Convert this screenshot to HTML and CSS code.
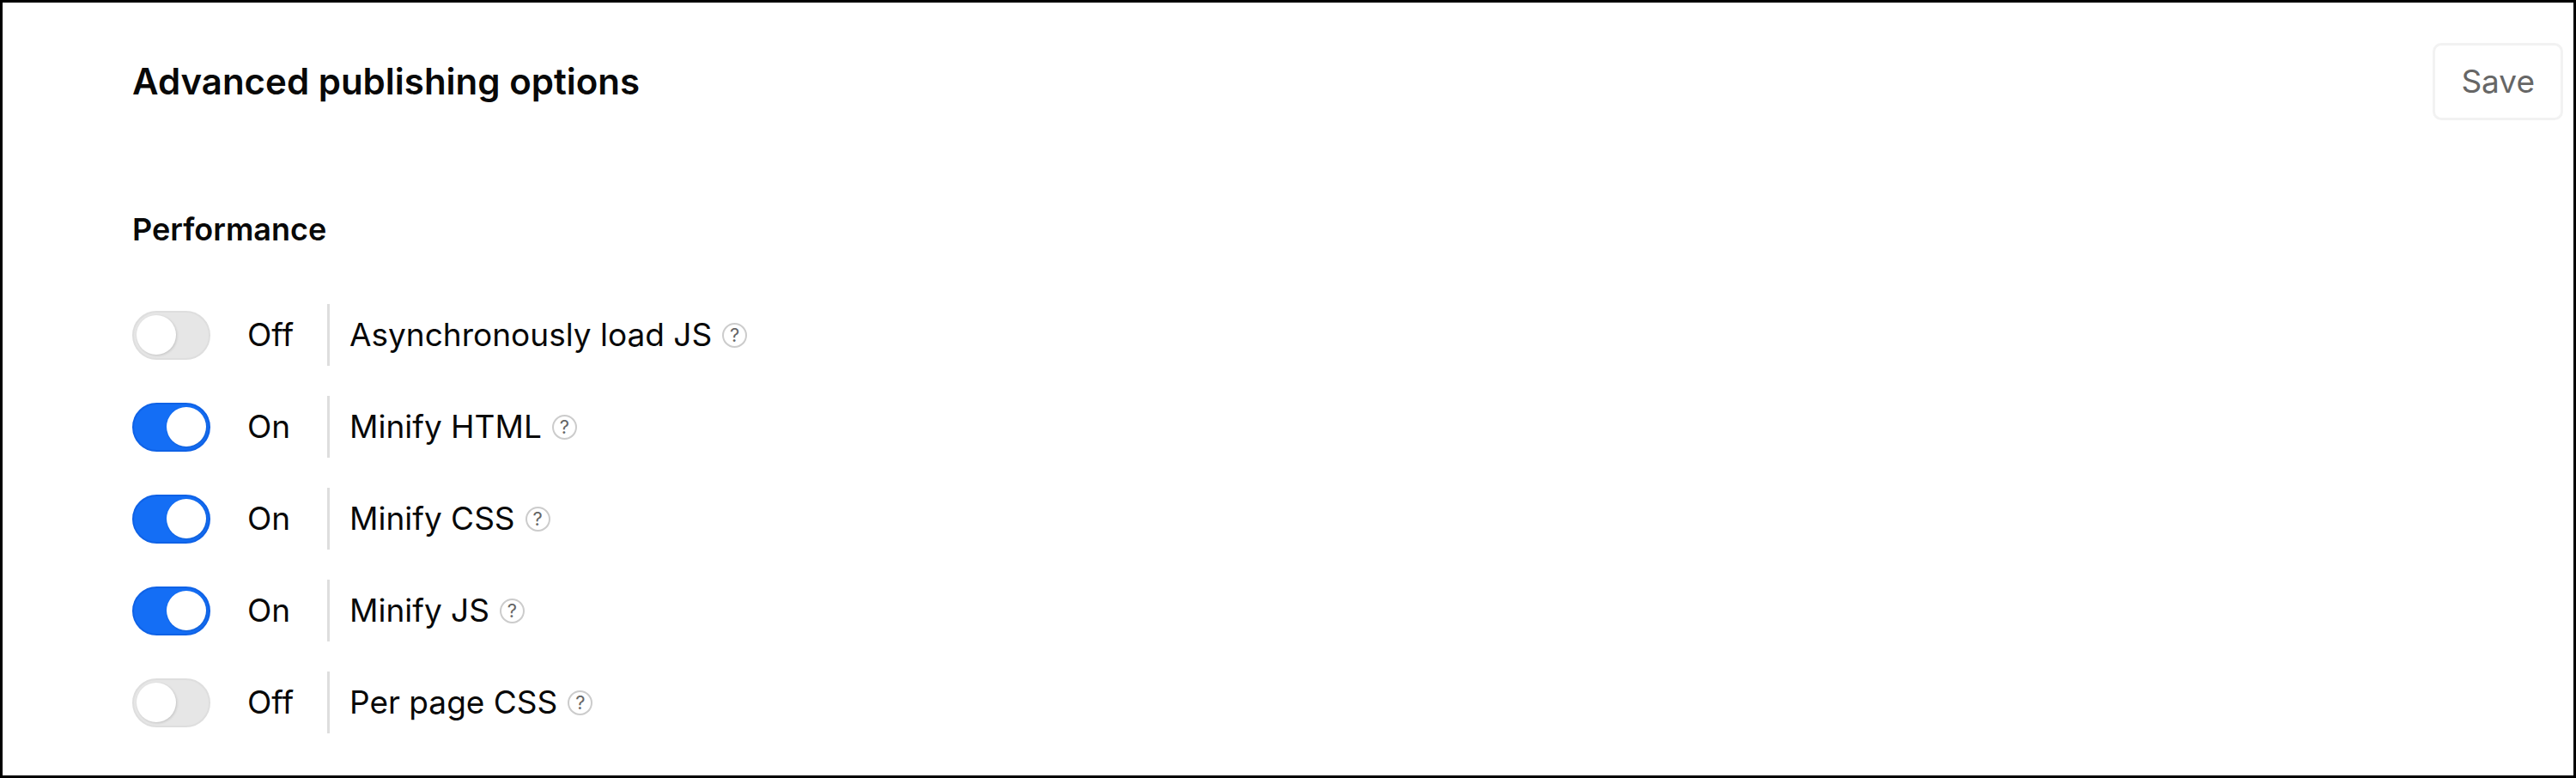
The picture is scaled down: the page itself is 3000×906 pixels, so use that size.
FILE: index.html
```html
<!DOCTYPE html>
<html lang="en">
    <head>
        <meta charset="utf-8">
        <title>Advanced publishing options</title>
        <link rel="stylesheet" href="styles.css">
    </head>
    <body>
        <main class="panel">
            <header class="panel-header">
                <h1>Advanced publishing options</h1>
                <button type="button" class="save" disabled>Save</button>
            </header>
            <section>
                <h2>Performance</h2>
                <ul class="options">
                    <li class="option">
                        <input type="checkbox" class="switch" id="async-js">
                        <span class="state">Off</span>
                        <label for="async-js">Asynchronously load JS</label>
                        <button type="button" class="help">?</button>
                    </li>
                    <li class="option">
                        <input type="checkbox" class="switch" id="minify-html" checked>
                        <span class="state">On</span>
                        <label for="minify-html">Minify HTML</label>
                        <button type="button" class="help">?</button>
                    </li>
                    <li class="option">
                        <input type="checkbox" class="switch" id="minify-css" checked>
                        <span class="state">On</span>
                        <label for="minify-css">Minify CSS</label>
                        <button type="button" class="help">?</button>
                    </li>
                    <li class="option">
                        <input type="checkbox" class="switch" id="minify-js" checked>
                        <span class="state">On</span>
                        <label for="minify-js">Minify JS</label>
                        <button type="button" class="help">?</button>
                    </li>
                    <li class="option">
                        <input type="checkbox" class="switch" id="page-css">
                        <span class="state">Off</span>
                        <label for="page-css">Per page CSS</label>
                        <button type="button" class="help">?</button>
                    </li>
                </ul>
            </section>
        </main>
    <script>
        // keep the On/Off text in step with the switch, and allow saving once something changed
        document.querySelectorAll('.switch').forEach(input => {
            input.addEventListener('change', () => {
                input.nextElementSibling.textContent = input.checked ? 'On' : 'Off';
                document.querySelector('.save').disabled = false;
            });
        });
    </script>
    </body>
</html>
```

FILE: styles.css
```css
* {
    box-sizing: border-box;
}

body {
    margin: 0;
    background-color: #fff;
    color: #080808;
    font-family: Inter, "Liberation Sans", sans-serif;
    font-size: 37px;
    line-height: 48px;
}

.panel {
    min-height: 100vh;
    padding: 47px 12px 47px 151px;
    border: 3px solid #000;
}

.panel-header {
    display: flex;
    align-items: center;
    justify-content: space-between;
    margin-bottom: 103px;
}

h1 {
    margin: 0;
    font-size: 42px;
    font-weight: 600;
}

h2 {
    margin: 0 0 63px;
    font-size: 36px;
    font-weight: 600;
}

.save {
    height: 90px;
    padding: 0 30px;
    border: 3px solid #f2f2f2;
    border-radius: 10px;
    background-color: #fff;
    color: #666;
    font: inherit;
}

.options {
    display: flex;
    flex-direction: column;
    gap: 35px;
    margin: 0;
    padding: 0;
    list-style: none;
}

.option {
    display: flex;
    align-items: center;
    height: 72px;
}

.switch {
    appearance: none;
    display: flex;
    align-items: center;
    width: 91px;
    height: 57px;
    margin: 0 43px 0 0;
    padding: 0 3px;
    border: 2px solid #dedede;
    border-radius: 29px;
    background-color: #e6e6e6;
    cursor: pointer;
}

.switch::before {
    content: "";
    width: 46px;
    height: 46px;
    border-radius: 50%;
    background-color: #fff;
    box-shadow: 1px 1px 3px rgba(0, 0, 0, 0.15);
}

.switch:checked {
    justify-content: flex-end;
    border-color: #0f62e6;
    background-color: #146ef5;
}

.state {
    width: 93px;
}

.option label {
    display: flex;
    align-items: center;
    height: 72px;
    padding-left: 23px;
    border-left: 3px solid #dedede;
}

.help {
    display: flex;
    align-items: center;
    justify-content: center;
    width: 29px;
    height: 29px;
    margin-left: 12px;
    padding: 0;
    border: 2px solid #ccc;
    border-radius: 50%;
    background-color: #fff;
    color: #666;
    font-family: inherit;
    font-size: 22px;
    line-height: 24px;
}
```
